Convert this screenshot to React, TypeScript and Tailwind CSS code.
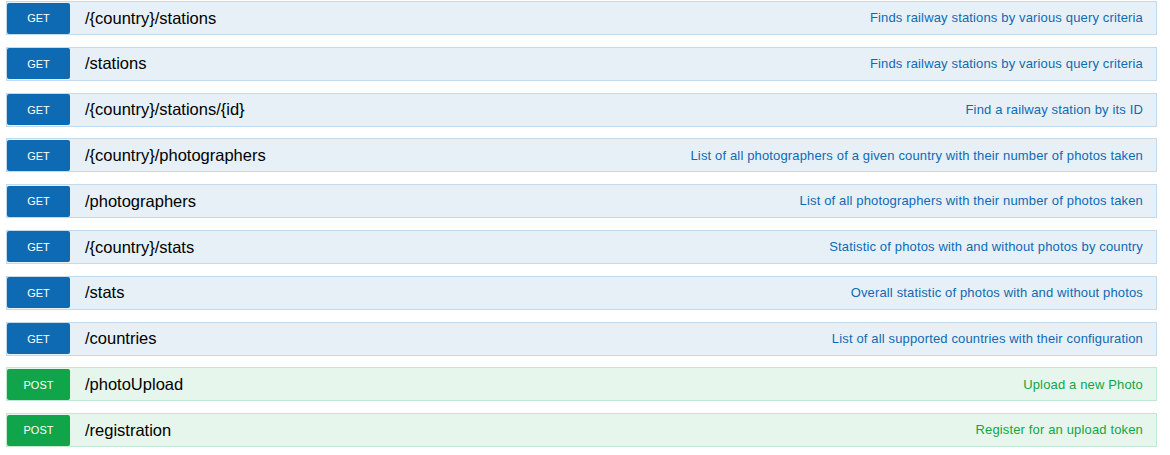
const endpoints = [
  { method: "get", path: "/{country}/stations", desc: "Finds railway stations by various query criteria" },
  { method: "get", path: "/stations", desc: "Finds railway stations by various query criteria" },
  { method: "get", path: "/{country}/stations/{id}", desc: "Find a railway station by its ID" },
  { method: "get", path: "/{country}/photographers", desc: "List of all photographers of a given country with their number of photos taken" },
  { method: "get", path: "/photographers", desc: "List of all photographers with their number of photos taken" },
  { method: "get", path: "/{country}/stats", desc: "Statistic of photos with and without photos by country" },
  { method: "get", path: "/stats", desc: "Overall statistic of photos with and without photos" },
  { method: "get", path: "/countries", desc: "List of all supported countries with their configuration" },
  { method: "post", path: "/photoUpload", desc: "Upload a new Photo" },
  { method: "post", path: "/registration", desc: "Register for an upload token" },
];

function Row({ method, path, desc }: { method: string; path: string; desc: string }) {
  const isGet = method === "get";
  return (
    <div
      className={
        "flex items-center h-[34px] border " +
        (isGet ? "bg-[#e7f0f7] border-[#c3d9ec]" : "bg-[#e7f6ec] border-[#c3e8d1]")
      }
    >
      <span
        className={
          "w-[63px] h-[31px] rounded-[2px] flex items-center justify-center text-white text-[11px] uppercase pt-[1px] " +
          (isGet ? "bg-[#0f6ab4]" : "bg-[#10a54a]")
        }
      >
        {method}
      </span>
      <span className="ml-[15px] text-[16.5px] text-black">{path}</span>
      <span
        className={
          "ml-auto pr-[13px] text-[13px] tracking-[0.15px] " +
          (isGet ? "text-[#0f6ab4]" : "text-[#10a54a]")
        }
      >
        {desc}
      </span>
    </div>
  );
}

export default function App() {
  return (
    <div className="w-[1170px] h-[455px] bg-white pt-[1px] pl-[6px] pr-[13px] font-['Liberation_Sans',Arial,sans-serif]">
      <div className="flex flex-col gap-[11.8px]">
        {endpoints.map((e, i) => (
          <Row key={i} {...e} />
        ))}
      </div>
    </div>
  );
}
